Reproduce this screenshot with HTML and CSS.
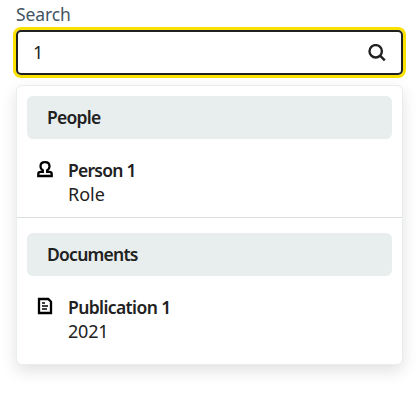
FILE: index.html
```html
<!DOCTYPE html>
<html lang="en">
<head>
<meta charset="utf-8">
<title>Search</title>
<link rel="stylesheet" href="styles.css">
</head>
<body>
<main class="search">
  <label class="search-label" for="query"><span class="t-search">Search</span></label>
  <div class="search-box">
    <input class="search-input" id="query" type="text" value="1">
    <svg class="search-icon" width="18" height="18" viewBox="0 0 18 18"><circle cx="7.7" cy="7.3" r="6.2"/><path d="M12 11.6 16.8 16.4"/></svg>
  </div>
  <div class="results">
    <section class="group">
      <h2 class="group-title"><span class="t-people">People</span></h2>
      <div class="result">
        <svg class="result-icon" width="18" height="18" viewBox="0 0 18 18"><path d="M2.3 16v-2.2c0-1.4 1-2 2.4-2h2.1v-1.5C5.3 9.4 4.5 8.2 4.5 6.4 4.5 3.7 6.4 2.1 9 2.1s4.5 1.6 4.5 4.3c0 1.8-.8 3-2.3 3.9v1.5h2.1c1.4 0 2.4.6 2.4 2V16z"/></svg>
        <div class="result-text"><strong class="name t-person">Person 1</strong><span class="detail t-role">Role</span></div>
      </div>
    </section>
    <section class="group">
      <h2 class="group-title"><span class="t-documents">Documents</span></h2>
      <div class="result">
        <svg class="result-icon" width="18" height="18" viewBox="0 0 18 18"><path d="M3 2h9.2L15 4.8V16H3z"/><path class="fine" d="M6 6h3M6 9h6M6 12h5"/></svg>
        <div class="result-text"><strong class="name t-publication">Publication 1</strong><span class="detail t-year">2021</span></div>
      </div>
    </section>
  </div>
</main>
</body>
</html>
```
FILE: styles.css
```css
* { box-sizing: border-box; }
body { min-height: 401px; margin: 0; background: #fff; color: #212121; font: 18px/24px "Noto Sans", "Open Sans", sans-serif; }
.search { width: 387px; margin-left: 16px; padding-top: 2px; }
.search-label { display: block; height: 28px; color: #425563; font-size: 17.5px; }
.search-box { display: flex; align-items: center; height: 45px; padding: 0 15px; border: 2px solid #212121; border-radius: 5px; box-shadow: 0 0 0 3px #fae100; }
.search-input { flex: 1; min-width: 0; padding: 0 0 1px; border: 0; outline: 0; background: none; color: #212121; font: 18px/24px "Noto Sans", sans-serif; }
.search-icon { flex: none; fill: none; stroke: #212121; stroke-width: 2.4; }
.results { height: 280px; margin-top: 10px; border: 1px solid #e8edee; border-radius: 6px; background: #fff; box-shadow: 0 6px 16px rgba(0, 0, 0, .12); }
.group { height: 132px; padding: 10px 10px 0; border-bottom: 1px solid #d8dddf; }
.group + .group { height: auto; padding-top: 15px; border-bottom: 0; }
.group-title { height: 43px; margin: 0; padding: 9px 20px; border-radius: 6px; background: #e8edee; font-size: 17.5px; line-height: 24px; font-weight: 600; }
.result { display: flex; margin-top: 19px; padding-left: 9px; }
.result-icon { flex: none; width: 18px; height: 18px; margin-top: 2px; fill: none; stroke: #000; stroke-width: 2.3; }
.result-icon .fine { stroke-width: 1.6; }
.result-text { display: flex; flex-direction: column; align-items: flex-start; margin-left: 14px; }
.name { font-size: 17.5px; font-weight: 600; }
.t-search { letter-spacing: -.1px; }
.t-people, .t-person, .t-documents { letter-spacing: -.75px; }
.t-publication { letter-spacing: -.6px; }
.t-year { letter-spacing: -.2px; }
```
